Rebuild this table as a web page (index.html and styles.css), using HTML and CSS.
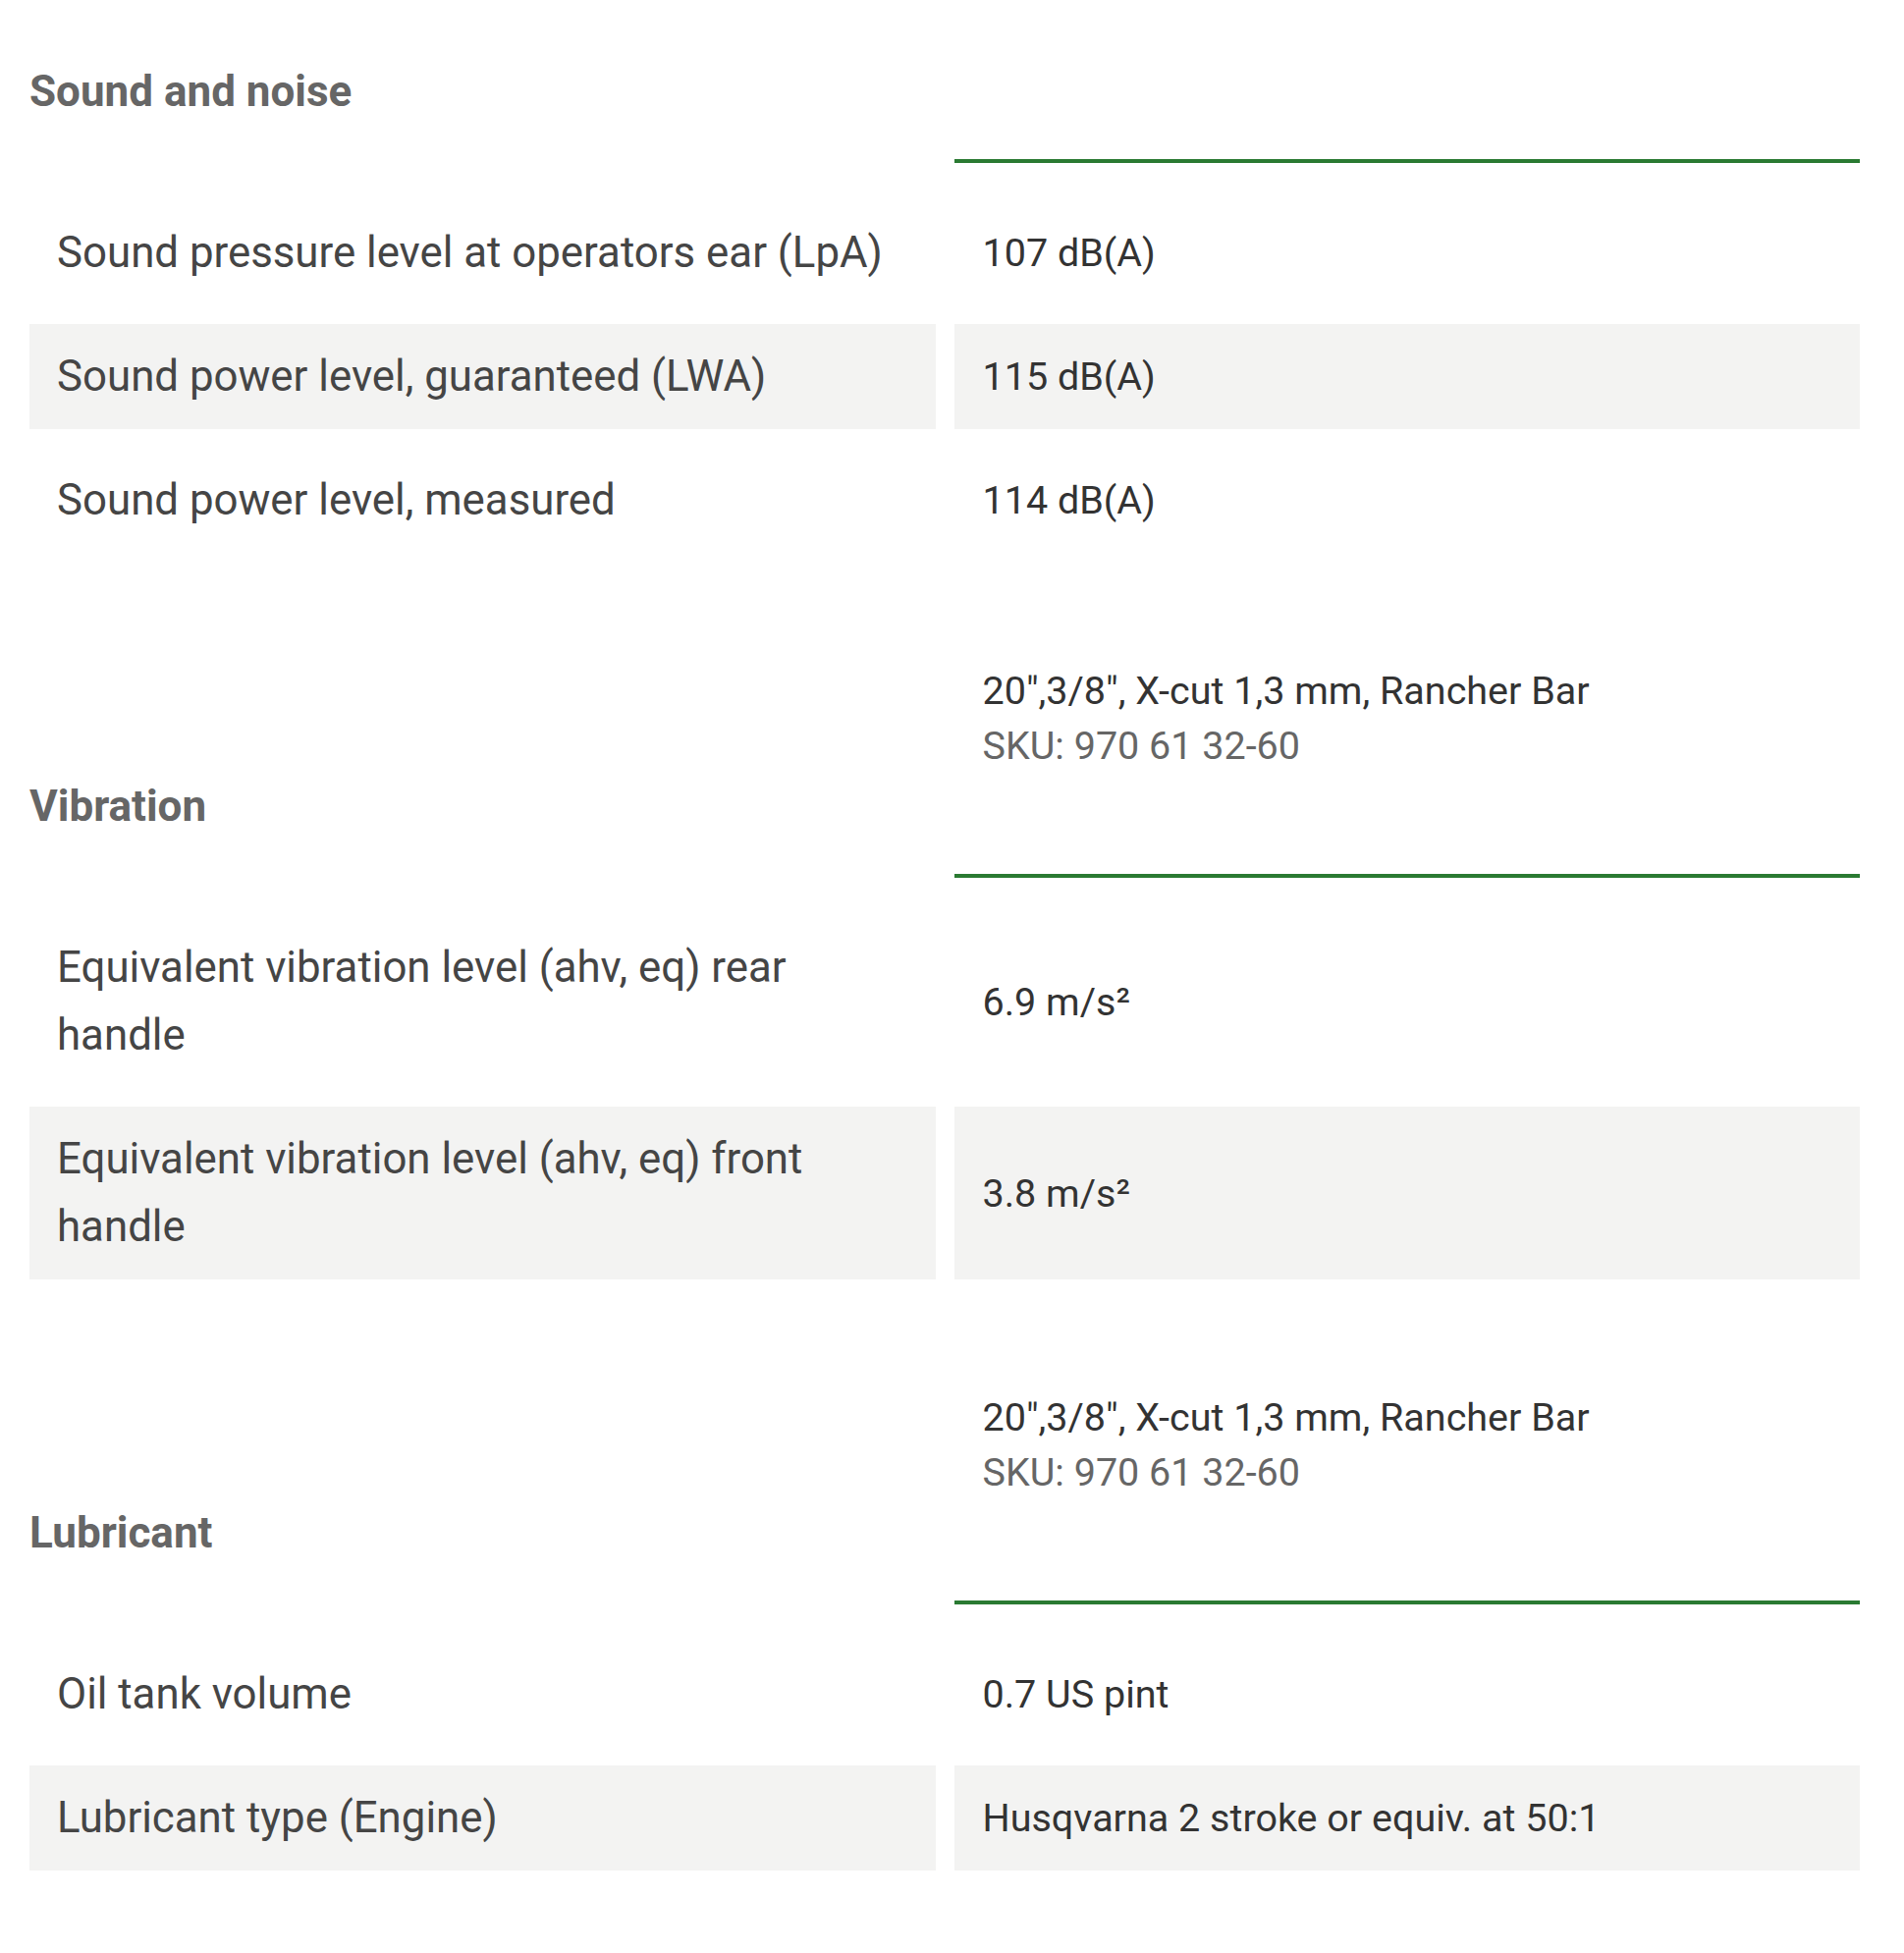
FILE: index.html
```html
<!DOCTYPE html>
<html lang="en">
<head>
<meta charset="utf-8">
<title>Specifications</title>
<link rel="stylesheet" href="styles.css">
</head>
<body>
<div class="specs">
  <section class="spec-group">
    <div class="group-head">
      <h3 class="group-title">Sound and noise</h3>
      <div class="group-rule"></div>
    </div>
    <div class="spec-row">
      <div class="spec-label">Sound pressure level at operators ear (LpA)</div>
      <div class="spec-value">107 dB(A)</div>
    </div>
    <div class="spec-row">
      <div class="spec-label">Sound power level, guaranteed (LWA)</div>
      <div class="spec-value">115 dB(A)</div>
    </div>
    <div class="spec-row">
      <div class="spec-label">Sound power level, measured</div>
      <div class="spec-value">114 dB(A)</div>
    </div>
  </section>

  <section class="spec-group">
    <div class="group-head">
      <h3 class="group-title">Vibration</h3>
      <div class="group-rule">
        <div class="accessory">
          <div class="accessory-name">20",3/8", X-cut 1,3 mm, Rancher Bar</div>
          <div class="accessory-sku">SKU: 970 61 32-60</div>
        </div>
      </div>
    </div>
    <div class="spec-row">
      <div class="spec-label">Equivalent vibration level (ahv, eq) rear handle</div>
      <div class="spec-value">6.9 m/s²</div>
    </div>
    <div class="spec-row">
      <div class="spec-label">Equivalent vibration level (ahv, eq) front handle</div>
      <div class="spec-value">3.8 m/s²</div>
    </div>
  </section>

  <section class="spec-group">
    <div class="group-head">
      <h3 class="group-title">Lubricant</h3>
      <div class="group-rule">
        <div class="accessory">
          <div class="accessory-name">20",3/8", X-cut 1,3 mm, Rancher Bar</div>
          <div class="accessory-sku">SKU: 970 61 32-60</div>
        </div>
      </div>
    </div>
    <div class="spec-row">
      <div class="spec-label">Oil tank volume</div>
      <div class="spec-value">0.7 US pint</div>
    </div>
    <div class="spec-row">
      <div class="spec-label">Lubricant type (Engine)</div>
      <div class="spec-value">Husqvarna 2 stroke or equiv. at 50:1</div>
    </div>
  </section>
</div>
</body>
</html>
```

FILE: styles.css
```css
html, body {
  margin: 0;
  padding: 0;
  background: #ffffff;
}

body {
  font-family: Roboto, "Noto Sans", "Liberation Sans", sans-serif;
  color: #333333;
}

.specs {
  display: flex;
  flex-direction: column;
  gap: 39px;
  padding: 69px 45px 40px 30px;
}

.spec-group {
  display: flex;
  flex-direction: column;
  gap: 19px;
}

.group-head {
  display: grid;
  grid-template-columns: 1fr 1fr;
  column-gap: 19px;
  align-items: end;
  margin-bottom: 19px;
}

.group-title {
  margin: 0;
  padding: 0 0 48px 0;
  font-size: 44px;
  line-height: 49px;
  font-weight: 700;
  color: #666666;
}

.group-rule {
  border-bottom: 4px solid #2a7a32;
}

.accessory {
  padding: 74px 29px 102px 29px;
  font-size: 39.5px;
  line-height: 56px;
}

.accessory-name {
  color: #333333;
}

.accessory-sku {
  color: #666666;
}

.spec-row {
  display: grid;
  grid-template-columns: 1fr 1fr;
  column-gap: 19px;
}

.spec-label,
.spec-value {
  padding: 19px 28px;
}

.spec-label {
  font-size: 43.8px;
  line-height: 69px;
  color: #454545;
}

.spec-value {
  display: flex;
  align-items: center;
  padding-left: 29px;
  font-size: 39.5px;
  line-height: 69px;
  color: #333333;
}

.spec-row:nth-child(odd) .spec-label,
.spec-row:nth-child(odd) .spec-value {
  background: #f3f3f2;
}
```
